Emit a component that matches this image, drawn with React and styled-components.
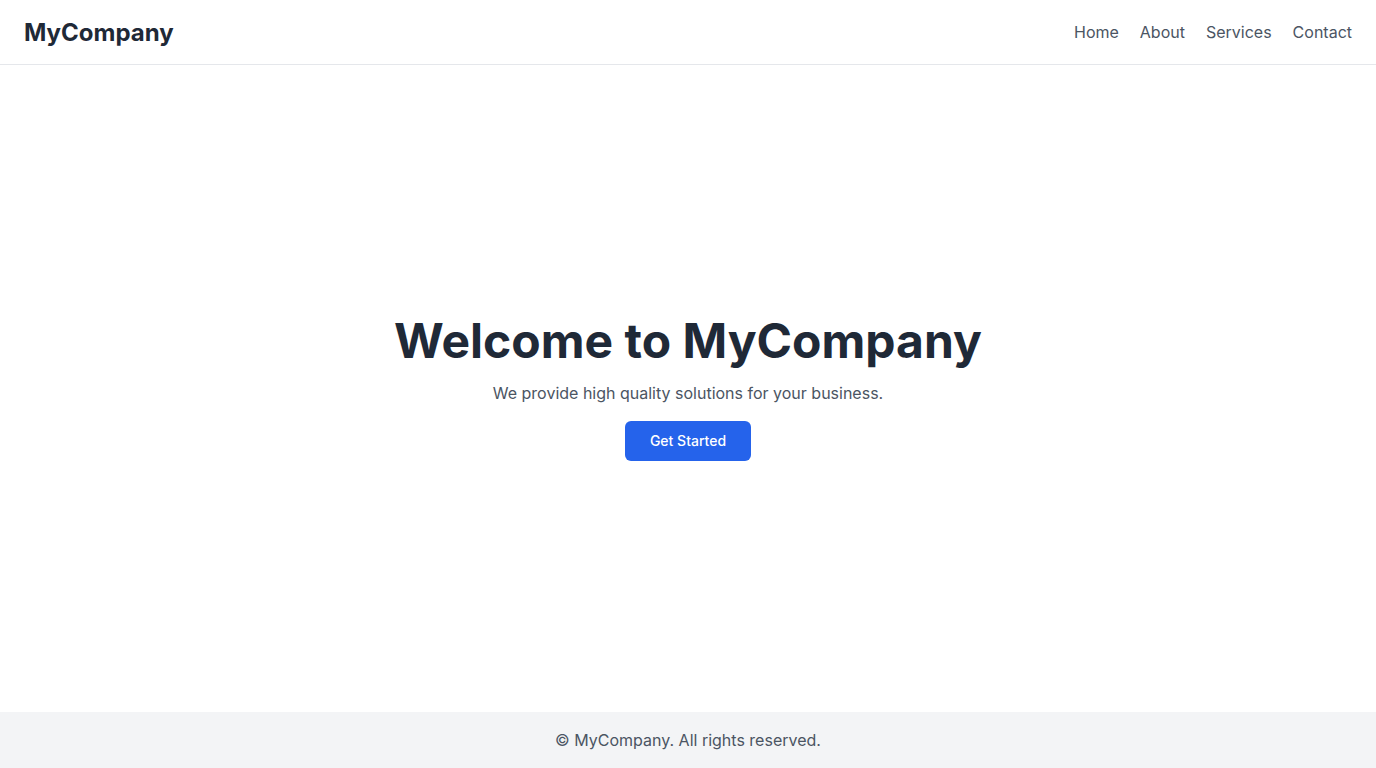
import React from "react";
import styled, { createGlobalStyle } from "styled-components";

const GlobalStyle = createGlobalStyle`
  * { box-sizing: border-box; }
  html, body { margin: 0; padding: 0; height: 100%; }
  body { font-family: Inter, "Noto Sans", sans-serif; background: #ffffff; color: #1f2937; }
  #root { min-height: 100vh; }
`;

const Page = styled.div`
  display: flex;
  flex-direction: column;
  min-height: 100vh;
`;

const Header = styled.header`
  height: 65px;
  display: flex;
  align-items: center;
  justify-content: space-between;
  padding: 0 24px;
  border-bottom: 1px solid #e5e7eb;
`;

const Logo = styled.div`
  font-size: 24px;
  font-weight: 700;
  color: #1f2937;
`;

const Nav = styled.nav`
  display: flex;
  gap: 21px;
`;

const NavLink = styled.a`
  font-size: 16px;
  color: #4b5563;
  text-decoration: none;
`;

const Main = styled.main`
  flex: 1;
  display: flex;
  flex-direction: column;
  align-items: center;
  justify-content: center;
  text-align: center;
`;

const Title = styled.h1`
  margin: 0 0 16px;
  font-size: 48px;
  line-height: 48px;
  font-weight: 700;
  color: #1f2937;
`;

const Subtitle = styled.p`
  margin: 0 0 16px;
  font-size: 16px;
  line-height: 24px;
  color: #4b5563;
`;

const Button = styled.button`
  font-family: inherit;
  font-size: 14px;
  font-weight: 500;
  line-height: 20px;
  padding: 10px 25px;
  color: #ffffff;
  background: #2563eb;
  border: none;
  border-radius: 6px;
  cursor: pointer;
`;

const Footer = styled.footer`
  height: 56px;
  display: flex;
  align-items: center;
  justify-content: center;
  background: #f3f4f6;
  font-size: 16px;
  color: #4b5563;
`;

export default function App() {
  return (
    <>
      <GlobalStyle />
      <Page>
        <Header>
          <Logo>MyCompany</Logo>
          <Nav>
            <NavLink href="#">Home</NavLink>
            <NavLink href="#">About</NavLink>
            <NavLink href="#">Services</NavLink>
            <NavLink href="#">Contact</NavLink>
          </Nav>
        </Header>
        <Main>
          <Title>Welcome to MyCompany</Title>
          <Subtitle>We provide high quality solutions for your business.</Subtitle>
          <Button>Get Started</Button>
        </Main>
        <Footer>© MyCompany. All rights reserved.</Footer>
      </Page>
    </>
  );
}
